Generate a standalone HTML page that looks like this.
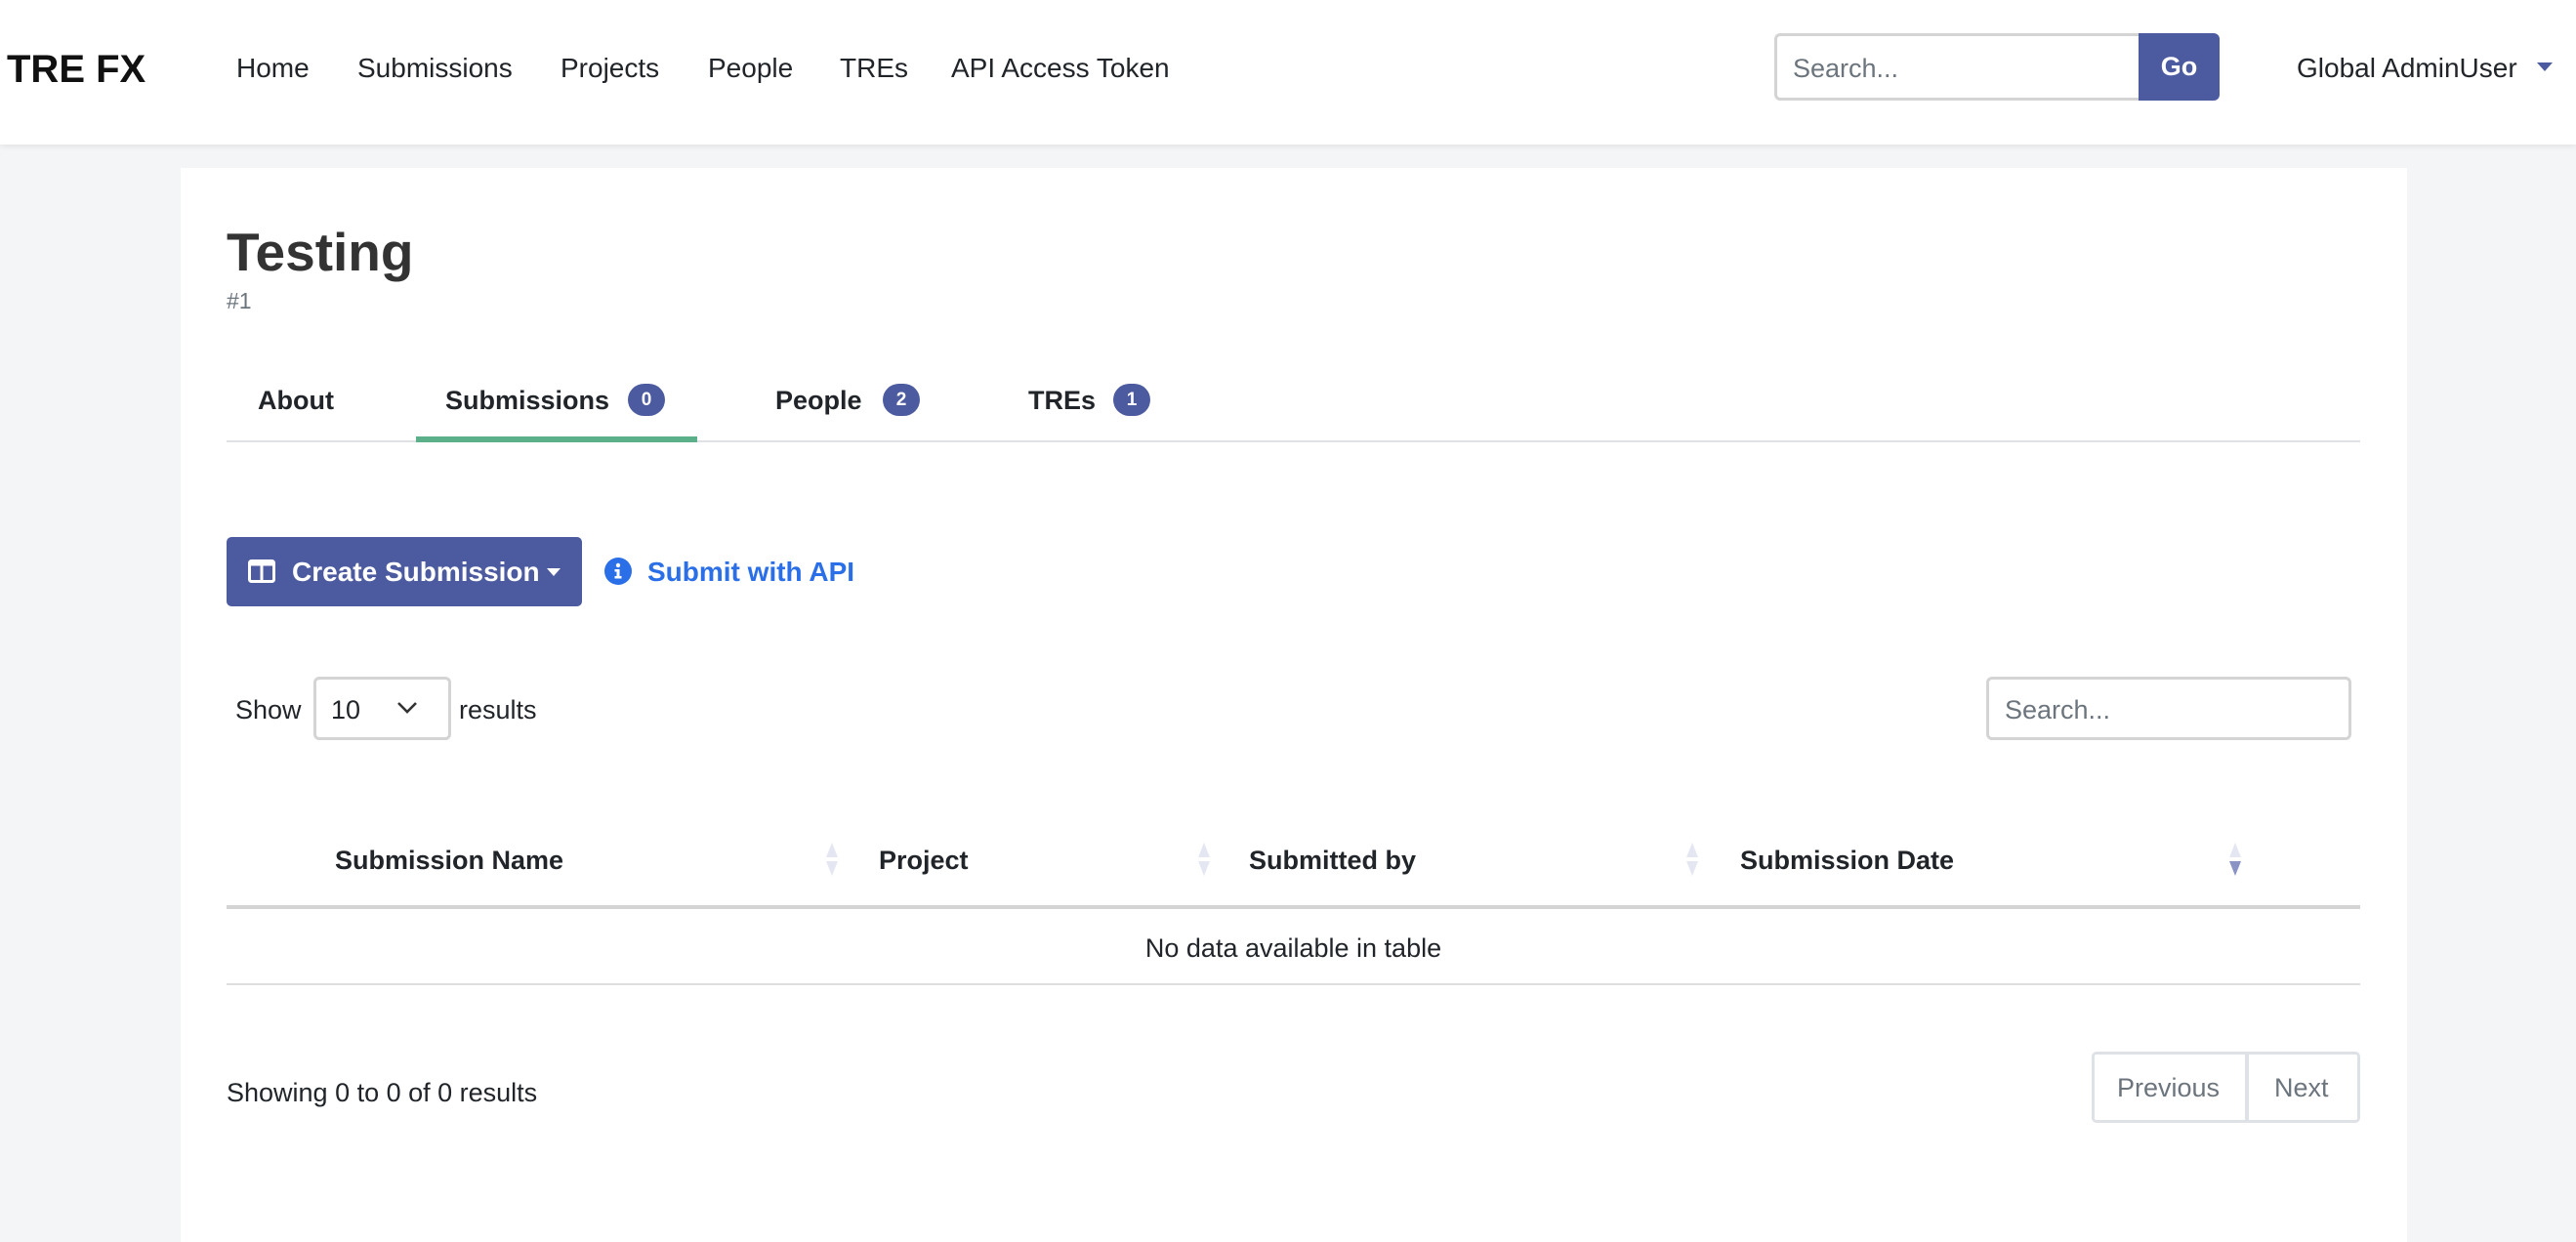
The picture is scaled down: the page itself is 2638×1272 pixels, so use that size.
<!DOCTYPE html>
<html><head><meta charset="utf-8"><style>
*{margin:0;padding:0;box-sizing:border-box}
body{width:2638px;height:1208px;background:#f4f5f7;font-family:"Liberation Sans",sans-serif;color:#212529;position:relative;overflow:hidden}
.a{position:absolute;white-space:nowrap}
.nav{position:absolute;left:0;top:0;width:2638px;height:148px;background:#fff;box-shadow:0 2px 6px rgba(0,0,0,.08)}
.nl{font-size:28px;top:53px;line-height:34px;color:#212529}
.card{position:absolute;left:185px;top:172px;width:2280px;height:1100px;background:#fff}
.tab{font-size:27px;font-weight:bold;top:393px;line-height:34px;color:#212529}
.badge{position:absolute;top:393px;width:38px;height:33px;border-radius:17px;background:#4c5ba0;color:#fff;font-size:19px;font-weight:bold;text-align:center;line-height:33px}
.th{font-size:27px;font-weight:bold;top:864px;line-height:34px}
.sort{position:absolute;top:862px;width:16px;height:36px}
</style></head><body>
<div class="nav"></div>
<div class="a" style="left:7px;top:49px;font-size:40px;font-weight:bold;line-height:44px;color:#111">TRE FX</div>
<div class="a nl" style="left:242px">Home</div>
<div class="a nl" style="left:366px">Submissions</div>
<div class="a nl" style="left:574px">Projects</div>
<div class="a nl" style="left:725px">People</div>
<div class="a nl" style="left:860px">TREs</div>
<div class="a nl" style="left:974px">API Access Token</div>
<div class="a" style="left:1817px;top:34px;width:375px;height:69px;border:3px solid #d4d4d4;border-right:none;border-radius:6px 0 0 6px;background:#fff"></div>
<div class="a" style="left:1836px;top:53px;font-size:27px;line-height:34px;color:#6c757d">Search...</div>
<div class="a" style="left:2190px;top:34px;width:83px;height:69px;background:#4c5ba0;border-radius:0 6px 6px 0;color:#fff;font-weight:bold;font-size:27px;line-height:69px;text-align:center">Go</div>
<div class="a" style="left:2352px;top:53px;font-size:28px;line-height:34px">Global AdminUser</div>
<div class="a" style="left:2598px;top:64px;width:0;height:0;border-left:8px solid transparent;border-right:8px solid transparent;border-top:9px solid #4c5ba0"></div>

<div class="card"></div>
<div class="a" style="left:232px;top:226px;font-size:55px;font-weight:bold;line-height:64px;color:#333">Testing</div>
<div class="a" style="left:232px;top:295px;font-size:23px;line-height:26px;color:#6c757d">#1</div>

<div class="a tab" style="left:264px">About</div>
<div class="a tab" style="left:456px">Submissions</div><div class="badge" style="left:643px">0</div>
<div class="a tab" style="left:794px">People</div><div class="badge" style="left:904px">2</div>
<div class="a tab" style="left:1053px">TREs</div><div class="badge" style="left:1140px">1</div>
<div class="a" style="left:232px;top:451px;width:2185px;height:2px;background:#dee2e6"></div>
<div class="a" style="left:426px;top:447px;width:288px;height:6px;background:#5bb08a"></div>

<div class="a" style="left:232px;top:550px;width:364px;height:71px;background:#4c5ba0;border-radius:5px"></div>
<svg class="a" style="left:254px;top:573px" width="28" height="24" viewBox="0 0 28 24"><rect x="1.5" y="1.5" width="25" height="21" rx="2" fill="none" stroke="#fff" stroke-width="3"/><rect x="1.5" y="1.5" width="25" height="5" fill="#fff"/><line x1="14" y1="2" x2="14" y2="22" stroke="#fff" stroke-width="3"/></svg>
<div class="a" style="left:299px;top:569px;font-size:28px;font-weight:bold;line-height:34px;color:#fff">Create Submission</div>
<div class="a" style="left:560px;top:582px;width:0;height:0;border-left:7px solid transparent;border-right:7px solid transparent;border-top:8px solid #fff"></div>
<svg class="a" style="left:619px;top:571px" width="28" height="28" viewBox="0 0 28 28"><circle cx="14" cy="14" r="14" fill="#2a6fe8"/><circle cx="14" cy="8" r="2.2" fill="#fff"/><path d="M10.5 12h5v7h2v2.5h-7V19h2v-4.5h-2z" fill="#fff"/></svg>
<div class="a" style="left:663px;top:569px;font-size:28px;font-weight:bold;line-height:34px;color:#2a6fe8">Submit with API</div>

<div class="a" style="left:241px;top:710px;font-size:27px;line-height:34px">Show</div>
<div class="a" style="left:321px;top:693px;width:141px;height:65px;border:3px solid #d4d4d4;border-radius:6px;background:#fff"></div>
<div class="a" style="left:339px;top:710px;font-size:27px;line-height:34px">10</div>
<svg class="a" style="left:406px;top:718px" width="22" height="14" viewBox="0 0 22 14"><path d="M2 2l9 9 9-9" fill="none" stroke="#333" stroke-width="2.6"/></svg>
<div class="a" style="left:470px;top:710px;font-size:27px;line-height:34px">results</div>
<div class="a" style="left:2034px;top:693px;width:374px;height:65px;border:3px solid #d4d4d4;border-radius:6px;background:#fff"></div>
<div class="a" style="left:2053px;top:710px;font-size:27px;line-height:34px;color:#6c757d">Search...</div>

<div class="a th" style="left:343px">Submission Name</div>
<div class="a th" style="left:900px">Project</div>
<div class="a th" style="left:1279px">Submitted by</div>
<div class="a th" style="left:1782px">Submission Date</div>
<svg class="sort" style="left:844px" viewBox="0 0 16 36"><path d="M8 1L14 16H2z" fill="#e4e7f1"/><path d="M2 20H14L8 35z" fill="#e4e7f1"/></svg>
<svg class="sort" style="left:1225px" viewBox="0 0 16 36"><path d="M8 1L14 16H2z" fill="#e4e7f1"/><path d="M2 20H14L8 35z" fill="#e4e7f1"/></svg>
<svg class="sort" style="left:1725px" viewBox="0 0 16 36"><path d="M8 1L14 16H2z" fill="#e4e7f1"/><path d="M2 20H14L8 35z" fill="#e4e7f1"/></svg>
<svg class="sort" style="left:2281px" viewBox="0 0 16 36"><path d="M8 1L14 16H2z" fill="#e4e7f1"/><path d="M2 20H14L8 35z" fill="#8a93c4"/></svg>
<div class="a" style="left:232px;top:927px;width:2185px;height:4px;background:#d4d4d4"></div>
<div class="a" style="left:232px;top:954px;width:2185px;text-align:center;font-size:27px;line-height:34px">No data available in table</div>
<div class="a" style="left:232px;top:1007px;width:2185px;height:2px;background:#dedede"></div>

<div class="a" style="left:232px;top:1102px;font-size:27px;line-height:34px">Showing 0 to 0 of 0 results</div>
<div class="a" style="left:2142px;top:1077px;width:275px;height:73px;border:3px solid #dee2e6;border-radius:5px;background:#fff"></div>
<div class="a" style="left:2299px;top:1077px;width:4px;height:73px;background:#dee2e6"></div>
<div class="a" style="left:2168px;top:1097px;font-size:27px;line-height:34px;color:#6c757d">Previous</div>
<div class="a" style="left:2329px;top:1097px;font-size:27px;line-height:34px;color:#6c757d">Next</div>
</body></html>
